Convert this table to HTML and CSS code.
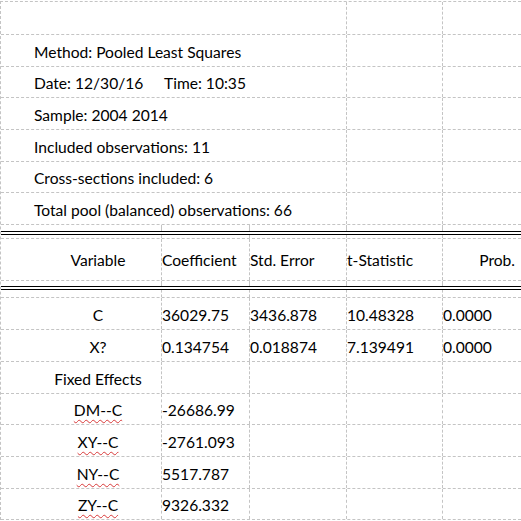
FILE: index.html
```html
<!DOCTYPE html>
<html>
<head>
<meta charset="utf-8">
<link rel="stylesheet" href="styles.css">
</head>
<body>
<div class="sheet">
  <div class="row h33"><div class="cell wide"></div><div class="cell"></div><div class="cell last"></div></div>
  <div class="row h32"><div class="cell wide text info">Method: Pooled Least Squares</div><div class="cell"></div><div class="cell last"></div></div>
  <div class="row h31"><div class="cell wide text info"><span class="date">Date: 12/30/16</span><span>Time: 10:35</span></div><div class="cell"></div><div class="cell last"></div></div>
  <div class="row h32"><div class="cell wide text info">Sample: 2004 2014</div><div class="cell"></div><div class="cell last"></div></div>
  <div class="row h32"><div class="cell wide text info">Included observations: 11</div><div class="cell"></div><div class="cell last"></div></div>
  <div class="row h31"><div class="cell wide text info">Cross-sections included: 6</div><div class="cell"></div><div class="cell last"></div></div>
  <div class="row h32"><div class="cell wide text info">Total pool (balanced) observations: 66</div><div class="cell"></div><div class="cell last"></div></div>

  <div class="sep">
    <div class="seg s6"><div class="cell"></div><div class="cell"></div><div class="cell"></div><div class="cell"></div><div class="cell last"></div></div>
    <div class="double"></div>
    <div class="seg s3 dashed"><div class="cell"></div><div class="cell"></div><div class="cell"></div><div class="cell"></div><div class="cell last"></div></div>
  </div>

  <div class="row head"><div class="cell text name">Variable</div><div class="cell text">Coefficient</div><div class="cell text">Std. Error</div><div class="cell text">t-Statistic</div><div class="cell text last right">Prob.</div></div>

  <div class="sep">
    <div class="seg s5"><div class="cell"></div><div class="cell"></div><div class="cell"></div><div class="cell"></div><div class="cell last"></div></div>
    <div class="double"></div>
    <div class="seg s7 dashed"><div class="cell"></div><div class="cell"></div><div class="cell"></div><div class="cell"></div><div class="cell last"></div></div>
  </div>

  <div class="row h32"><div class="cell text name">C</div><div class="cell text">36029.75</div><div class="cell text">3436.878</div><div class="cell text">10.48328</div><div class="cell text last">0.0000</div></div>
  <div class="row h32"><div class="cell text name">X?</div><div class="cell text">0.134754</div><div class="cell text">0.018874</div><div class="cell text">7.139491</div><div class="cell text last">0.0000</div></div>
  <div class="row h32"><div class="cell text name">Fixed Effects</div><div class="cell"></div><div class="cell"></div><div class="cell"></div><div class="cell last"></div></div>
  <div class="row h31"><div class="cell text name"><span class="spell">DM--C</span></div><div class="cell text">-26686.99</div><div class="cell"></div><div class="cell"></div><div class="cell last"></div></div>
  <div class="row h32"><div class="cell text name"><span class="spell">XY--C</span></div><div class="cell text">-2761.093</div><div class="cell"></div><div class="cell"></div><div class="cell last"></div></div>
  <div class="row h32"><div class="cell text name"><span class="spell">NY--C</span></div><div class="cell text">5517.787</div><div class="cell"></div><div class="cell"></div><div class="cell last"></div></div>
  <div class="row h31"><div class="cell text name"><span class="spell">ZY--C</span></div><div class="cell text">9326.332</div><div class="cell"></div><div class="cell"></div><div class="cell last"></div></div>
</div>
</body>
</html>
```

FILE: styles.css
```css
html, body {
  margin: 0;
  padding: 0;
  background: #ffffff;
}
body {
  padding-top: 1px;
  width: 521px;
  overflow: hidden;
  font-family: Lato, "Open Sans", sans-serif;
  font-size: 15.6px;
  color: #000000;
}
.sheet {
  border-top: 1px dashed #c4c4c4;
  border-left: 1px dashed #c4c4c4;
  width: 521px;
  box-sizing: border-box;
}
.row, .seg {
  display: grid;
  grid-template-columns: 161px 88px 97px 96px 1fr;
  box-sizing: border-box;
}
.row {
  border-bottom: 1px dashed #c4c4c4;
}
.h33 { height: 33px; }
.h32 { height: 32px; }
.h31 { height: 31px; }
.head { height: 42px; }
.cell {
  box-sizing: border-box;
  border-right: 1px dashed #c4c4c4;
  min-width: 0;
  white-space: nowrap;
}
.cell.last {
  border-right: none;
}
.wide {
  grid-column: span 3;
}
.text {
  display: flex;
  align-items: flex-end;
  line-height: 18px;
  padding-bottom: 5px;
}
.info {
  padding-left: 33px;
}
.date {
  display: inline-block;
  width: 130px;
}
.name {
  justify-content: center;
  padding-left: 34px;
}
.right {
  justify-content: flex-end;
  padding-right: 6px;
}
.head .text {
  padding-bottom: 11px;
}
.spell {
  text-decoration: underline wavy #d83a3a;
  text-decoration-thickness: 1px;
  text-underline-offset: 3px;
}
.sep {
  display: flex;
  flex-direction: column;
}
.s6 { height: 6px; }
.s5 { height: 5px; }
.s3 { height: 4px; }
.s7 { height: 8px; }
.dashed {
  border-bottom: 1px dashed #c4c4c4;
}
.double {
  height: 4px;
  box-sizing: border-box;
  border-top: 1px solid #000000;
  border-bottom: 1px solid #000000;
}
```
